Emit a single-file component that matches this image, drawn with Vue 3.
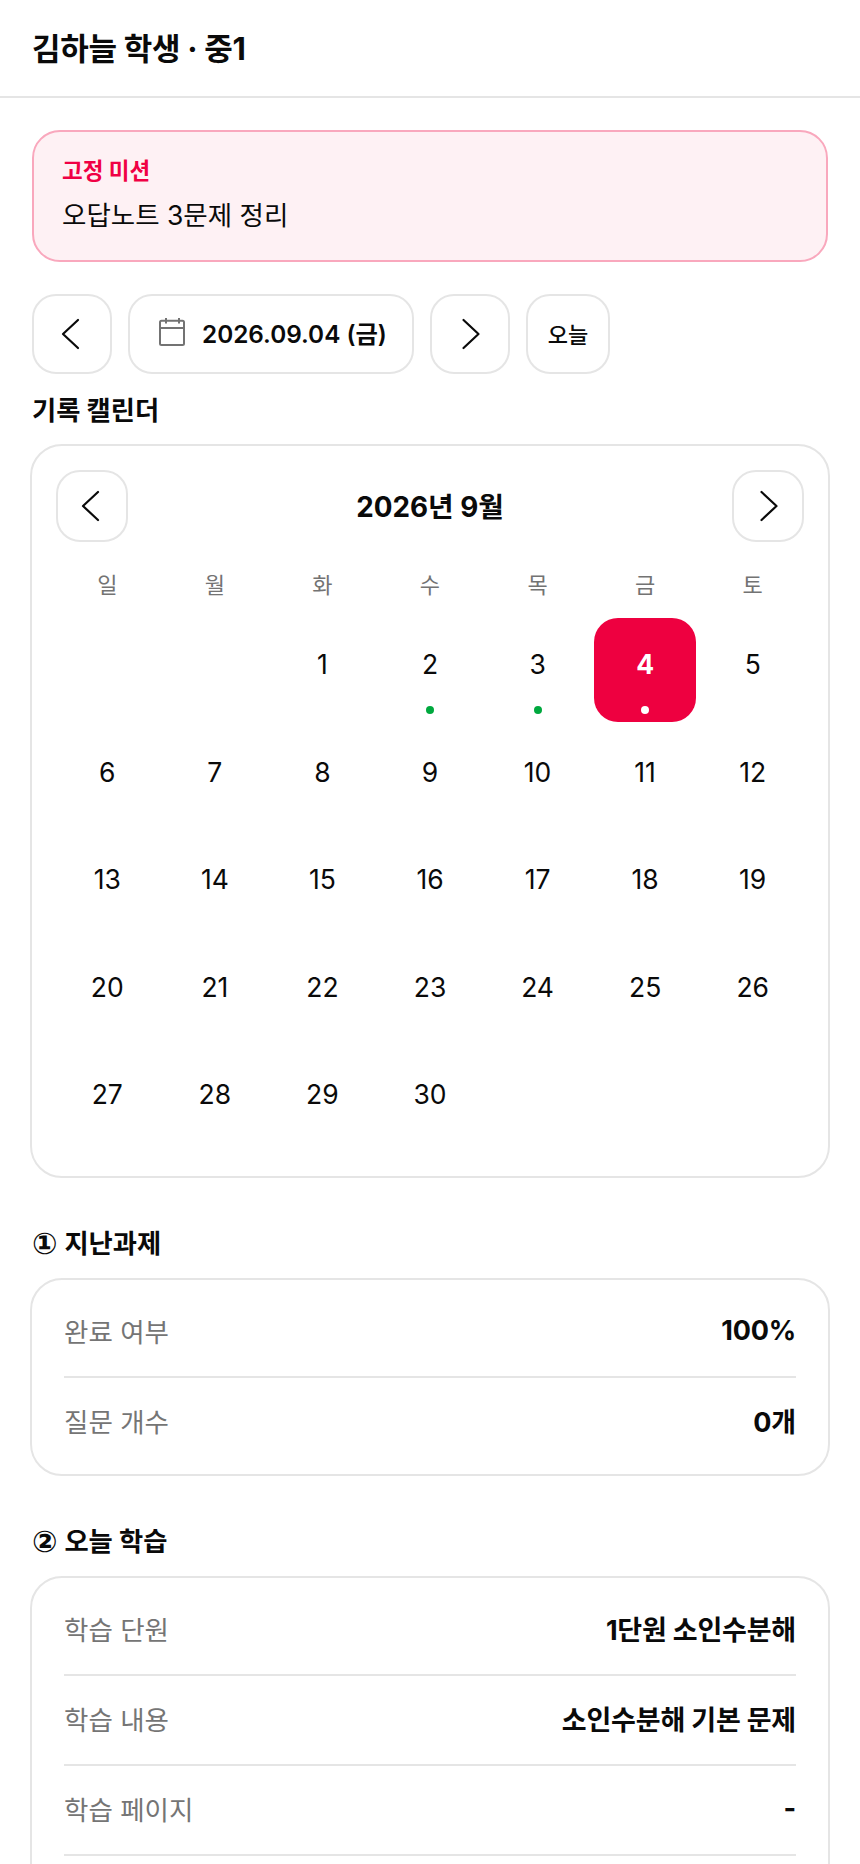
<template>
  <div class="page">
    <header class="top-bar">
      <h1 class="student">김하늘 학생 · 중1</h1>
    </header>

    <main class="content">
      <section class="mission">
        <div class="mission-label">고정 미션</div>
        <div class="mission-text">오답노트 3문제 정리</div>
      </section>

      <div class="date-nav">
        <button class="nav-btn">
          <svg class="chevron" viewBox="0 0 24 32"><path d="M18 2 L3 16 L18 30" /></svg>
        </button>
        <button class="date-btn">
          <svg class="cal-icon" viewBox="0 0 28 30">
            <rect x="2" y="2.7" width="24" height="24.3" rx="1.5" />
            <path d="M2 10 H26 M8 0 V5.5 M21 0 V5.5" />
          </svg>
          <span class="date-text">2026.09.04 (금)</span>
        </button>
        <button class="nav-btn">
          <svg class="chevron" viewBox="0 0 24 32"><path d="M5.5 2 L20.5 16 L5.5 30" /></svg>
        </button>
        <button class="today-btn">오늘</button>
      </div>

      <h2 class="cal-title">기록 캘린더</h2>
      <section class="calendar">
        <div class="cal-head">
          <button class="month-btn">
            <svg class="chevron" viewBox="0 0 24 32"><path d="M18 2 L3 16 L18 30" /></svg>
          </button>
          <div class="month">2026년 9월</div>
          <button class="month-btn">
            <svg class="chevron" viewBox="0 0 24 32"><path d="M5.5 2 L20.5 16 L5.5 30" /></svg>
          </button>
        </div>
        <div class="week">
          <div v-for="w in weekdays" :key="w">{{ w }}</div>
        </div>
        <div class="days">
          <div
            v-for="(d, i) in cells"
            :key="i"
            class="day"
            :class="{ selected: d === 4 }"
          >
            <span v-if="d">{{ d }}</span>
            <i v-if="marked.includes(d)" class="dot"></i>
          </div>
        </div>
      </section>

      <h2 class="sec-title"><span class="num">①</span>지난과제</h2>
      <section class="info-card">
        <div v-for="(r, i) in pastRows" :key="i" class="row">
          <span class="row-label">{{ r[0] }}</span>
          <span class="row-value">{{ r[1] }}</span>
        </div>
      </section>

      <h2 class="sec-title"><span class="num">②</span>오늘 학습</h2>
      <section class="info-card">
        <div v-for="(r, i) in todayRows" :key="i" class="row">
          <span class="row-label">{{ r[0] }}</span>
          <span class="row-value">{{ r[1] }}</span>
        </div>
      </section>
    </main>
  </div>
</template>

<script setup>
const weekdays = ['일', '월', '화', '수', '목', '금', '토']
const marked = [2, 3, 4]

// 2026년 9월은 화요일 시작
const cells = [null, null]
for (let d = 1; d <= 30; d++) cells.push(d)

const pastRows = [
  ['완료 여부', '100%'],
  ['질문 개수', '0개'],
]

// 마지막 행은 화면 아래로 잘림
const todayRows = [
  ['학습 단원', '1단원 소인수분해'],
  ['학습 내용', '소인수분해 기본 문제'],
  ['학습 페이지', '-'],
  ['', ''],
]
</script>

<style>
html, body {
  margin: 0;
  background: #fff;
}
</style>

<style scoped>
.page {
  width: 860px;
  height: 1864px;
  overflow: hidden;
  background: #fff;
  color: #0a0a0a;
  font-family: Inter, "Noto Sans CJK KR", sans-serif;
}

button {
  font-family: inherit;
  color: inherit;
  background: #fff;
  padding: 0;
  cursor: pointer;
}

.top-bar {
  box-sizing: border-box;
  height: 98px;
  border-bottom: 2px solid #e5e5e5;
  display: flex;
  align-items: center;
  padding: 0 32px 4px;
}

.student {
  margin: 0;
  font-size: 31px;
  font-weight: 700;
  letter-spacing: -0.3px;
}

.content {
  padding: 32px 32px 0;
}

.mission {
  box-sizing: border-box;
  width: 796px;
  height: 132px;
  padding: 24px 28px;
  background: #fef1f4;
  border: 2px solid #f9a8bd;
  border-radius: 28px;
}

.mission-label {
  font-size: 22.5px;
  font-weight: 700;
  line-height: 30px;
  color: #f00044;
}

.mission-text {
  margin-top: 11px;
  font-size: 26.5px;
  line-height: 36px;
}

.date-nav {
  display: flex;
  gap: 16px;
  margin-top: 32px;
}

.nav-btn {
  box-sizing: border-box;
  width: 80px;
  height: 80px;
  border: 2px solid #e5e5e5;
  border-radius: 24px;
  display: flex;
  align-items: center;
  justify-content: center;
}

.chevron {
  width: 24px;
  height: 32px;
  fill: none;
  stroke: #0a0a0a;
  stroke-width: 2.2;
  stroke-linecap: round;
  stroke-linejoin: round;
}

.date-btn {
  box-sizing: border-box;
  width: 286px;
  height: 80px;
  border: 2px solid #e5e5e5;
  border-radius: 24px;
  display: flex;
  align-items: center;
  gap: 16px;
  padding-left: 28px;
  font-size: 24.3px;
  font-weight: 600;
}

.date-text {
  padding-bottom: 3px;
}

.cal-icon {
  width: 28px;
  height: 30px;
  margin-top: -2px;
  fill: none;
  stroke: #737373;
  stroke-width: 2;
}

.today-btn {
  box-sizing: border-box;
  width: 84px;
  height: 80px;
  border: 2px solid #e5e5e5;
  border-radius: 24px;
  padding-bottom: 2px;
  font-size: 22px;
  font-weight: 500;
}

.cal-title {
  margin: 18px 0 0;
  font-size: 26.3px;
  line-height: 38px;
  font-weight: 700;
}

.calendar {
  box-sizing: border-box;
  width: 800px;
  height: 734px;
  margin: 14px 0 0 -2px;
  padding: 24px;
  border: 2px solid #e5e5e5;
  border-radius: 32px;
}

.cal-head {
  display: flex;
  align-items: center;
  justify-content: space-between;
}

.month-btn {
  box-sizing: border-box;
  width: 72px;
  height: 72px;
  border: 2px solid #e5e5e5;
  border-radius: 24px;
  display: flex;
  align-items: center;
  justify-content: center;
}

.month {
  font-size: 27.8px;
  font-weight: 700;
  padding-bottom: 2px;
}

.week {
  display: grid;
  grid-template-columns: repeat(7, 1fr);
  column-gap: 5px;
  margin-top: 21px;
  text-align: center;
  font-size: 22px;
  line-height: 44px;
  color: #737373;
}

.days {
  display: grid;
  grid-template-columns: repeat(7, 1fr);
  grid-auto-rows: 103.5px;
  gap: 4px 5px;
  margin-top: 11px;
}

.day {
  position: relative;
  display: flex;
  justify-content: center;
  padding-top: 28px;
  box-sizing: border-box;
  font-size: 26.5px;
  line-height: 36px;
  border-radius: 24px;
}

.day.selected {
  background: #ee0040;
  color: #fff;
  font-weight: 700;
}

.dot {
  position: absolute;
  left: 50%;
  bottom: 8px;
  width: 8px;
  height: 8px;
  margin-left: -4px;
  border-radius: 50%;
  background: #00a83e;
}

.selected .dot {
  background: #fff;
}

.sec-title {
  margin: 47px 0 15px;
  font-size: 26.3px;
  line-height: 38px;
  font-weight: 700;
}

.num {
  font-family: "DejaVu Sans", sans-serif;
  font-size: 30px;
  line-height: 1;
  vertical-align: -1px;
  margin-right: 7px;
}

.info-card {
  box-sizing: border-box;
  width: 800px;
  margin-left: -2px;
  padding: 8px 32px;
  border: 2px solid #e5e5e5;
  border-radius: 32px;
}

.row {
  display: flex;
  justify-content: space-between;
  align-items: center;
  height: 90px;
  box-sizing: border-box;
  padding-bottom: 3px;
  border-bottom: 2px solid #e5e5e5;
  font-size: 26.5px;
}

.info-card .row:last-child {
  height: 88px;
  border-bottom: none;
}

.row-label {
  color: #757575;
}

.row-value {
  font-size: 27px;
  font-weight: 700;
  letter-spacing: -0.2px;
}
</style>
